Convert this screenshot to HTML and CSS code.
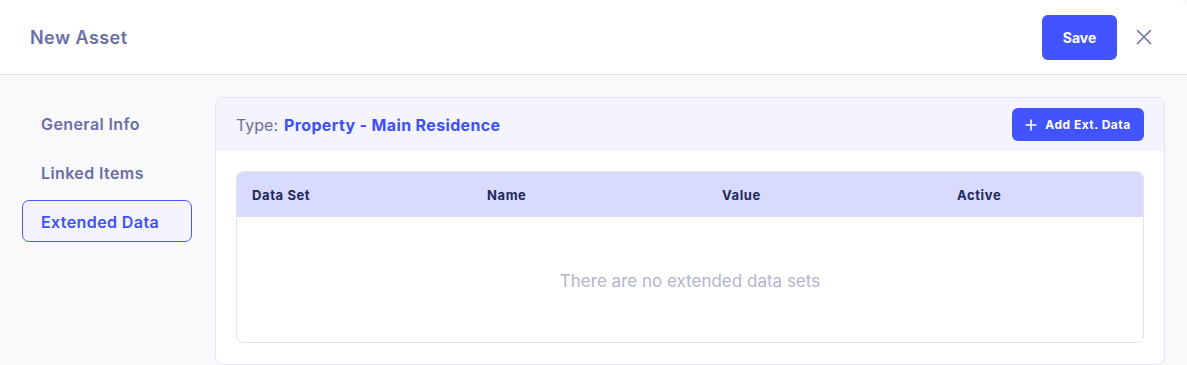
FILE: index.html
```html
<!DOCTYPE html>
<html lang="en">
<head>
    <meta charset="UTF-8">
    <meta name="viewport" content="width=device-width, initial-scale=1.0">
    <title>New Asset</title>
    <link rel="stylesheet" href="styles.css">
</head>
<body>

    <div class="modal">
        <!-- Header -->
        <div class="modal-header">
            <h1 class="modal-title">New Asset</h1>
            <div class="header-actions">
                <button class="save-btn">Save</button>
                <button class="close-btn" aria-label="Close">
                    <svg width="16" height="16" viewBox="0 0 16 16">
                        <path d="M1.5 1.5 L14.5 14.5 M14.5 1.5 L1.5 14.5" stroke="#70749c" stroke-width="1.6" fill="none" stroke-linecap="round"/>
                    </svg>
                </button>
            </div>
        </div>

        <div class="modal-body">
            <div class="side-nav">
                <div class="nav-item">General Info</div>
                <div class="nav-item">Linked Items</div>
                <div class="nav-item active">Extended Data</div>
            </div>

            <div class="card">
                <div class="card-header">
                    <div class="type-line">
                        <span class="type-label">Type:</span>
                        <span class="type-value">Property - Main Residence</span>
                    </div>
                    <button class="add-btn">
                        <svg width="12" height="12" viewBox="0 0 12 12">
                            <path d="M6 0.5 V11.5 M0.5 6 H11.5" stroke="#fff" stroke-width="1.6" fill="none"/>
                        </svg>
                        Add Ext. Data
                    </button>
                </div>

                <div class="card-content">
                    <div class="table">
                        <div class="table-head">
                            <div>Data Set</div>
                            <div>Name</div>
                            <div>Value</div>
                            <div>Active</div>
                        </div>
                        <div class="table-empty">There are no extended data sets</div>
                    </div>
                </div>
            </div>
        </div>
    </div>

</body>
</html>
```

FILE: styles.css
```css
body {
    margin: 0;
    font-family: Inter, "Noto Sans", sans-serif;
    background-color: #f9f9fb;
    overflow: hidden;
}

.modal {
    height: 365px;
    display: flex;
    flex-direction: column;
}

.modal-header {
    height: 74px;
    background: white;
    border-bottom: 1px solid #dedfe6;
    border-top-right-radius: 8px;
    display: flex;
    align-items: center;
    justify-content: space-between;
    padding: 0 35px 0 30px;
}

.modal-title {
    margin: 0;
    font-size: 18px;
    font-weight: 600;
    color: #6a6ea6;
    letter-spacing: 0.45px;
}

.header-actions {
    display: flex;
    align-items: center;
    gap: 19px;
}

.save-btn {
    width: 75px;
    height: 45px;
    border: none;
    border-radius: 6px;
    background-color: #4254ff;
    color: white;
    font-family: inherit;
    font-size: 14px;
    font-weight: 700;
    cursor: pointer;
}

.close-btn {
    background: none;
    border: none;
    padding: 0;
    width: 16px;
    height: 16px;
    display: flex;
    cursor: pointer;
}

.modal-body {
    flex: 1;
    display: flex;
    padding: 22px 22px 0 22px;
    gap: 23px;
}

.side-nav {
    width: 170px;
    padding-top: 5px;
    display: flex;
    flex-direction: column;
    gap: 7px;
}

.nav-item {
    height: 42px;
    box-sizing: border-box;
    display: flex;
    align-items: center;
    padding: 1px 0 0 18px;
    border: 1px solid transparent;
    border-radius: 7px;
    font-size: 16px;
    font-weight: 600;
    color: #6a6ea6;
    letter-spacing: 0.4px;
}

.nav-item.active {
    border-color: #4a5bff;
    background-color: #f4f4fe;
    color: #3e50f7;
}

.card {
    width: 950px;
    box-sizing: border-box;
    background: white;
    border: 1px solid #e4e6f0;
    border-radius: 8px;
    overflow: hidden;
    display: flex;
    flex-direction: column;
}

.card-header {
    height: 53px;
    background-color: #f3f4fe;
    display: flex;
    align-items: center;
    justify-content: space-between;
    padding: 0 20px;
}

.type-line {
    display: flex;
    align-items: baseline;
    gap: 6px;
    font-size: 16px;
    padding-top: 1px;
}

.type-label {
    color: #6b6f92;
}

.type-value {
    color: #3e50f7;
    font-weight: 700;
    letter-spacing: 0.35px;
}

.add-btn {
    height: 33px;
    width: 132px;
    border: none;
    border-radius: 6px;
    background-color: #4254ff;
    color: white;
    font-family: inherit;
    font-size: 12px;
    font-weight: 700;
    letter-spacing: 0.5px;
    display: flex;
    align-items: center;
    justify-content: center;
    gap: 8px;
    cursor: pointer;
}

.card-content {
    padding: 20px 20px 20px 20px;
}

.table {
    border: 1px solid #e2e4ee;
    border-radius: 7px;
    overflow: hidden;
}

.table-head {
    height: 45px;
    background-color: #d8dbfc;
    display: grid;
    grid-template-columns: 235px 235px 235px 1fr;
    align-items: center;
    padding-left: 15px;
    font-size: 13px;
    font-weight: 700;
    color: #22285c;
    letter-spacing: 0.6px;
}

.table-empty {
    height: 125px;
    display: flex;
    align-items: center;
    justify-content: center;
    font-size: 17px;
    color: #b3b5cc;
    padding-top: 2px;
    box-sizing: border-box;
}
```
